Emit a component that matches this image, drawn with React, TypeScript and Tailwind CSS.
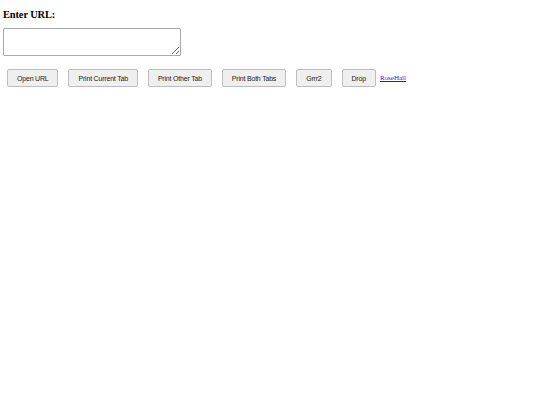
export default function App() {
  const buttons = ['Open URL', 'Print Current Tab', 'Print Other Tab', 'Print Both Tabs', 'Grrr2', 'Drop'];

  return (
    <div className="min-h-[405px] bg-white px-[3px] pt-[9px]" style={{ fontFamily: '"Liberation Serif", serif' }}>
      <h3 className="text-[10.4px] font-bold leading-[12px] tracking-[-0.1px] text-black">Enter URL:</h3>
      <textarea
        className="mt-[7px] block h-[28px] w-[178px] rounded-[1px] border border-[#a9a9a9] bg-white p-[2px] text-[9px]"
      />
      <div className="mt-[13px] flex items-center pl-[4px]">
        {buttons.map((label) => (
          <button
            key={label}
            className="mr-[10px] h-[18px] rounded-[2px] border border-[#bdbdbd] bg-[#efefef] px-[9px] text-[7px] leading-none tracking-[-0.2px] text-[#222]"
            style={{ fontFamily: '"Liberation Sans", Arial, sans-serif' }}
          >
            {label}
          </button>
        ))}
        <a href="#" className="-ml-[6px] text-[7px] text-[#1a1aee] underline">
          RoseHall
        </a>
      </div>
    </div>
  );
}
